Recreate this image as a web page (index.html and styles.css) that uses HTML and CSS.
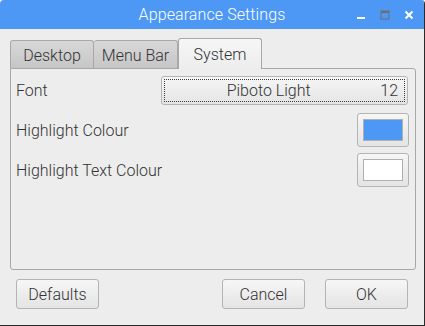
FILE: index.html
```html
<!DOCTYPE html>
<html lang="en">
<head>
    <meta charset="UTF-8">
    <meta name="viewport" content="width=device-width, initial-scale=1.0">
    <title>Appearance Settings</title>
    <link rel="stylesheet" href="styles.css">
</head>
<body>
    <div id="window">
        <div class="titlebar">
            <span class="title">Appearance Settings</span>
            <div class="controls">
                <svg class="ctl" width="10" height="10" viewBox="0 0 10 10"><rect x="1" y="7" width="8" height="2" fill="#fff"/></svg>
                <svg class="ctl" width="10" height="10" viewBox="0 0 10 10"><rect x="1" y="1" width="8" height="8" fill="none" stroke="#6e6e6e" stroke-width="1"/><rect x="1" y="1" width="8" height="2" fill="#6e6e6e"/></svg>
                <svg class="ctl" width="10" height="10" viewBox="0 0 10 10"><path d="M1.5 1.5 L8.5 8.5 M8.5 1.5 L1.5 8.5" stroke="#fff" stroke-width="2"/></svg>
            </div>
        </div>

        <div class="content">
            <div class="tabs">
                <div class="tab">Desktop</div>
                <div class="tab">Menu Bar</div>
                <div class="tab active">System</div>
            </div>
            <div class="panel">
                <div class="row fontrow">
                    <span class="label">Font</span>
                    <button class="fontbtn">
                        <span class="focus">
                            <span class="fontname">Piboto Light</span>
                            <span class="fontsize">12</span>
                        </span>
                    </button>
                </div>
                <div class="row">
                    <span class="label">Highlight Colour</span>
                    <button class="colorbtn"><span class="swatch blue"></span></button>
                </div>
                <div class="row">
                    <span class="label">Highlight Text Colour</span>
                    <button class="colorbtn"><span class="swatch white"></span></button>
                </div>
            </div>
            <div class="buttons">
                <button class="btn">Defaults</button>
                <div class="spacer"></div>
                <button class="btn">Cancel</button>
                <button class="btn">OK</button>
            </div>
        </div>
    </div>
</body>
</html>
```

FILE: styles.css
```css
html, body{
    margin:0;
    padding:0;
    background-color:#ffffff;
}
#window{
    width:425px;
    height:326px;
    box-sizing:border-box;
    display:flex;
    flex-direction:column;
    background-color:#ededed;
    border-radius:4px 4px 0 0;
    border-right:1px solid #2a2a2a;
    border-bottom:1px solid #2a2a2a;
    overflow:hidden;
    font-family:Roboto, "Liberation Sans", sans-serif;
    font-weight:300;
    color:#333333;
}
.titlebar{
    height:29px;
    flex:none;
    background-color:#4d98f5;
    position:relative;
    display:flex;
    align-items:center;
    justify-content:center;
}
.title{
    color:#ffffff;
    font-size:16px;
    font-weight:300;
    letter-spacing:0.1px;
}
.controls{
    position:absolute;
    right:10px;
    top:10px;
    display:flex;
    gap:14px;
}
.content{
    flex:1;
    display:flex;
    flex-direction:column;
    padding:8px 8px 0 10px;
}
.tabs{
    display:flex;
    align-items:flex-end;
    height:31px;
}
.tab{
    width:84px;
    height:28px;
    box-sizing:border-box;
    border:1px solid #a8a8a8;
    border-bottom:none;
    border-radius:3px 3px 0 0;
    background:linear-gradient(#d8d8d8, #c6c6c6);
    font-size:16px;
    display:flex;
    align-items:center;
    justify-content:center;
    padding-top:2px;
}
.tab + .tab{
    border-left:none;
}
.tab.active{
    height:31px;
    background:linear-gradient(#f6f6f6, #ededed);
    border-left:1px solid #a8a8a8;
    margin-bottom:-1px;
    position:relative;
    z-index:1;
    padding-top:0;
}
.panel{
    height:202px;
    box-sizing:border-box;
    width:406px;
    border:1px solid #a8a8a8;
    border-radius:0 3px 3px 3px;
    padding:7px 6px 0 5px;
    display:flex;
    flex-direction:column;
    gap:6px;
}
.row{
    display:flex;
    align-items:center;
    justify-content:space-between;
}
.fontrow{
    margin-bottom:2px;
}
.label{
    font-size:16px;
}
button{
    font-family:Roboto, "Liberation Sans", sans-serif;
    font-weight:300;
    color:#333333;
    font-size:16px;
    border:1px solid #b4b4b4;
    border-radius:3px;
    background:linear-gradient(#f6f6f6, #e4e4e4);
    padding:0;
    box-sizing:border-box;
}
.fontbtn{
    width:247px;
    height:29px;
    padding:2px;
    margin-right:1px;
}
.focus{
    display:flex;
    align-items:center;
    height:100%;
    box-sizing:border-box;
    border:1px dotted #3c3c3c;
    padding:0 6px 0 0;
}
.fontname{
    flex:1;
    text-align:center;
    padding-right:8px;
}
.colorbtn{
    width:52px;
    height:34px;
    display:flex;
    align-items:center;
    justify-content:center;
}
.swatch{
    width:40px;
    height:22px;
    box-sizing:border-box;
    border:1px solid #b0b0b0;
}
.swatch.blue{
    background-color:#4d98f5;
}
.swatch.white{
    background-color:#ffffff;
}
.buttons{
    display:flex;
    padding:9px 8px 0 6px;
    gap:20px;
}
.spacer{
    flex:1;
}
.btn{
    width:83px;
    height:30px;
}
```
